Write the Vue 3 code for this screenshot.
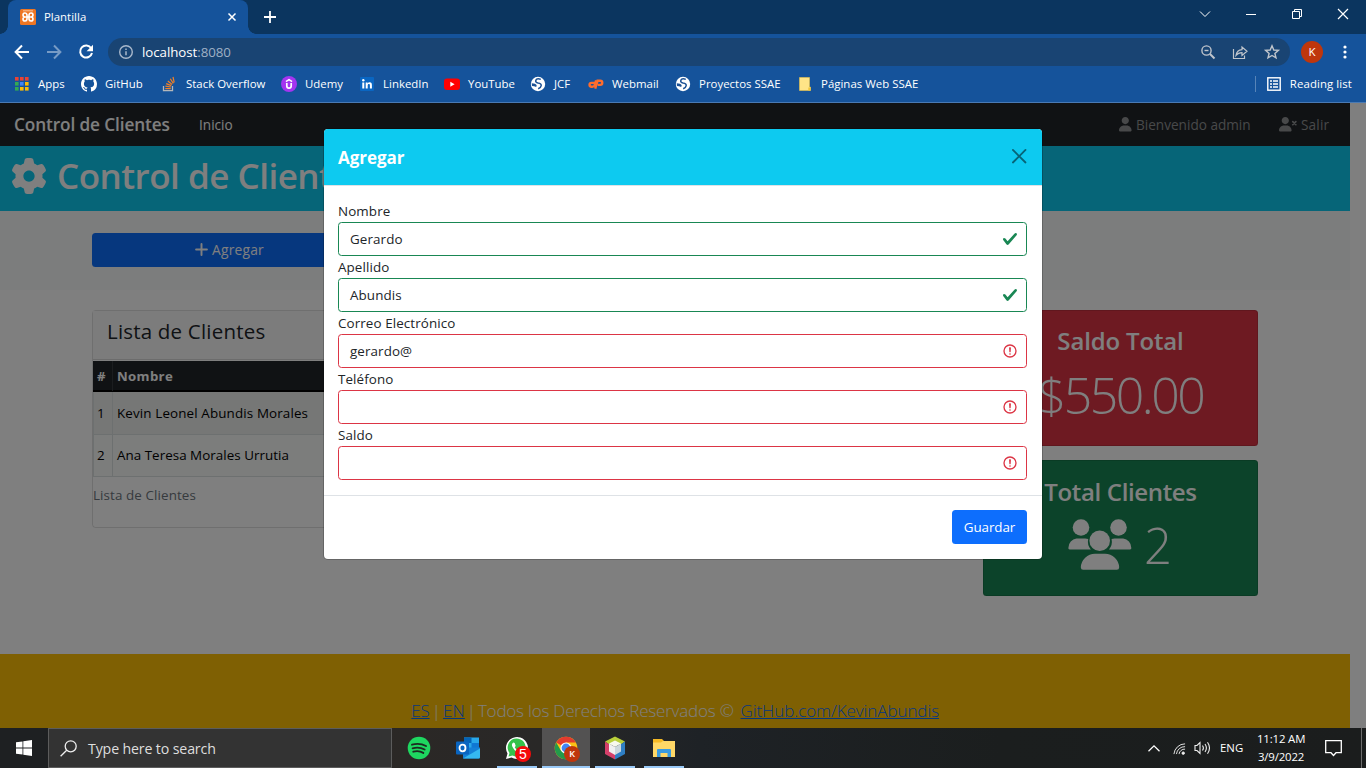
<script setup>
const bookmarks = [
  { id: 'apps', label: 'Apps' },
  { id: 'github', label: 'GitHub' },
  { id: 'stack', label: 'Stack Overflow' },
  { id: 'udemy', label: 'Udemy' },
  { id: 'linkedin', label: 'LinkedIn' },
  { id: 'youtube', label: 'YouTube' },
  { id: 'globe', label: 'JCF' },
  { id: 'cpanel', label: 'Webmail' },
  { id: 'globe', label: 'Proyectos SSAE' },
  { id: 'folder', label: 'Páginas Web SSAE' }
]
const appDots = ['#ea4335', '#ea4335', '#ea4335', '#34a853', '#4285f4', '#fbbc05', '#34a853', '#fbbc05', '#fbbc05']
const fields = [
  { label: 'Nombre', value: 'Gerardo', valid: true },
  { label: 'Apellido', value: 'Abundis', valid: true },
  { label: 'Correo Electrónico', value: 'gerardo@', valid: false },
  { label: 'Teléfono', value: '', valid: false },
  { label: 'Saldo', value: '', valid: false }
]
const clients = ['Kevin Leonel Abundis Morales', 'Ana Teresa Morales Urrutia']
const userPath = 'M224 256c70.7 0 128-57.3 128-128S294.7 0 224 0S96 57.3 96 128s57.3 128 128 128zm-45.7 48C79.8 304 0 383.8 0 482.3C0 498.7 13.3 512 29.7 512H418.3c16.4 0 29.7-13.3 29.7-29.7C448 383.8 368.2 304 269.7 304H178.3z'
</script>

<template>
  <div class="screen">
    <header class="chrome">
      <div class="tabs">
        <div class="tab">
          <svg class="fav" viewBox="0 0 16 16"><rect width="16" height="16" rx="1.5" fill="#ee7623" /><path d="M3 1.800h10" stroke="#fbd3b5" stroke-width=".8" /><path d="M6.200 8H5a2 2 0 1 1 2-2.200v4.400A2 2 0 1 1 5 8M9.800 8H11a2 2 0 1 0-2-2.200v4.400A2 2 0 1 0 11 8M6.500 8h3" fill="none" stroke="#fff" stroke-width="1.600" /></svg>
          <span class="tab-title">Plantilla</span>
          <svg class="tab-x" viewBox="0 0 8 8"><path d="M.5.5l7 7M7.500.5l-7 7" stroke="#fff" stroke-width="1.5" /></svg>
        </div>
        <svg class="plus" viewBox="0 0 12 12"><path d="M6 0v12M0 6h12" stroke="#fff" stroke-width="1.8" /></svg>
        <div class="win">
          <svg viewBox="0 0 12 12"><path d="M1 3.500l5 5 5-5" fill="none" stroke="#fff" /></svg>
          <svg viewBox="0 0 12 12"><path d="M1 6.500h10" stroke="#fff" /></svg>
          <svg viewBox="0 0 12 12"><path d="M1.500 3.500h7v7h-7zM3.500 3.500v-2h7v7h-2" fill="none" stroke="#fff" /></svg>
          <svg viewBox="0 0 12 12"><path d="M1 1l10 10M11 1L1 11" stroke="#fff" stroke-width="1.2" /></svg>
        </div>
      </div>
      <div class="toolbar">
        <svg class="nav" viewBox="0 0 16 16"><path d="M15 8H2M8 1.500L1.600 8 8 14.500" fill="none" stroke="#fff" stroke-width="2" /></svg>
        <svg class="nav dim" viewBox="0 0 16 16"><path d="M1 8h13M8 1.500L14.400 8 8 14.500" fill="none" stroke="#fff" stroke-width="2" /></svg>
        <svg class="nav" viewBox="0 0 16 16"><path d="M13.200 4.200A6 6 0 1 0 14 9" fill="none" stroke="#fff" stroke-width="2" /><path d="M15 .8v6.400H8.600z" fill="#fff" /></svg>
        <div class="omni">
          <svg class="info" viewBox="0 0 16 16"><circle cx="8" cy="8" r="6.300" fill="none" stroke="#a9b8cb" stroke-width="1.400" /><path d="M8 7.200v4M8 4.400v1.500" stroke="#a9b8cb" stroke-width="1.500" /></svg>
          <span class="url">localhost<i>:8080</i></span>
          <div class="omni-icons">
            <svg viewBox="0 0 16 16"><circle cx="6.500" cy="6.500" r="4.600" /><path d="M10 10l4.500 4.500" stroke-width="2" /><path d="M4.500 6.500h4" /></svg>
            <svg viewBox="0 0 16 16"><path d="M1.500 5v9.500h11v-3M4 11.500c.5-3.500 2.500-5.500 6-5.800V3l5 4.300-5 4.200V8.700c-2.800 0-4.500.9-6 2.800z" stroke-width="1.200" /></svg>
            <svg viewBox="0 0 16 16"><path d="M8 1.800l1.800 4.200 4.600.4-3.500 3 1.100 4.500L8 11.500l-4 2.400 1.100-4.500-3.500-3 4.600-.4z" /></svg>
          </div>
        </div>
        <span class="avatar">K</span>
        <svg class="dots" viewBox="0 0 4 14"><circle cx="2" cy="2" r="1.600" /><circle cx="2" cy="7" r="1.600" /><circle cx="2" cy="12" r="1.600" /></svg>
      </div>
      <div class="bookmarks">
        <div v-for="(b, i) in bookmarks" :key="i" class="bm">
          <svg viewBox="0 0 16 16">
            <template v-if="b.id === 'apps'"><rect v-for="(c, n) in appDots" :key="n" :x="1 + (n % 3) * 5" :y="1 + Math.floor(n / 3) * 5" width="3.600" height="3.600" :fill="c" /></template>
            <path v-else-if="b.id === 'github'" fill="#fff" d="M8 0C3.580 0 0 3.580 0 8c0 3.540 2.290 6.530 5.470 7.590.4.070.55-.17.55-.38 0-.19-.01-.82-.01-1.490-2.010.37-2.530-.49-2.690-.94-.09-.23-.48-.94-.82-1.130-.28-.15-.68-.52-.01-.53.63-.01 1.080.58 1.230.82.72 1.210 1.870.87 2.330.66.07-.52.28-.87.51-1.070-1.780-.2-3.640-.89-3.640-3.950 0-.87.31-1.590.82-2.150-.08-.2-.36-1.020.08-2.120 0 0 .67-.21 2.200.82.64-.18 1.320-.27 2-.27s1.360.09 2 .27c1.530-1.040 2.200-.82 2.200-.82.44 1.100.16 1.920.08 2.120.51.56.82 1.270.82 2.150 0 3.070-1.870 3.750-3.650 3.950.29.25.54.73.54 1.480 0 1.070-.01 1.930-.01 2.200 0 .21.15.46.55.38A8.010 8.010 0 0 0 16 8c0-4.420-3.580-8-8-8z" />
            <g v-else-if="b.id === 'stack'" fill="none"><path d="M1.500 10v4.700h9V10" stroke="#b4b7ba" stroke-width="1.300" /><path d="M3.300 12.700h5.500M3.400 10.200l5.500.8M4.200 7.600l5.100 2M5.800 5l4.300 3.500M8.300 2.700l3 4.700M11 1l1.200 5.500" stroke="#f48024" stroke-width="1.200" /></g>
            <g v-else-if="b.id === 'udemy'"><circle cx="8" cy="8" r="8" fill="#a435f0" /><path d="M5.800 7v3a2.200 2.200 0 0 0 4.400 0V7" fill="none" stroke="#fff" stroke-width="1.700" /><path d="M4.900 5.600L8 3.700l3.100 1.900" fill="none" stroke="#fff" stroke-width="1.500" /></g>
            <g v-else-if="b.id === 'linkedin'"><rect x="1" y="1" width="14" height="14" rx="1" fill="#0a66c2" /><path d="M3.300 6.500h2v6h-2zM6.700 6.500h1.900v.9c.4-.7 1.100-1.100 2-1.100 1.900 0 2.300 1.200 2.300 3v3.200h-2V9.600c0-.9-.1-1.500-1-1.500s-1.200.7-1.200 1.500v2.900h-2z" fill="#fff" /><circle cx="4.300" cy="4.300" r="1.200" fill="#fff" /></g>
            <g v-else-if="b.id === 'youtube'"><rect y="2.500" width="16" height="11.500" rx="3" fill="red" /><path d="M6.300 5.800v5l4.300-2.500z" fill="#fff" /></g>
            <g v-else-if="b.id === 'globe'"><circle cx="8" cy="8" r="7.200" fill="#fff" /><path d="M10.800 3.400q-4-1.500-5 1-.6 2 2.200 2.600 3.500.5 3.200 2.600-.3 2-3 3.200" fill="none" stroke="#1c5296" stroke-width="1.500" /><path d="M1.700 7.300q4 .2 5 2l-.5 1.800q-2-1-4.200-1z" fill="#1c5296" /></g>
            <g v-else-if="b.id === 'cpanel'" fill="none" stroke="#ff6c2c" stroke-width="2.400"><path d="M6.300 6.900H3.500a1.900 1.900 0 0 0 0 3.900h.9q1.800 0 2.300-1.800L8.100 4.300" /><path d="M7.200 12.600L9.500 4.800h2.700a2 2 0 0 1 0 4.100H9.800" /></g>
            <g v-else><path d="M2.500 1.500h10v9.500h1v3.500h-11z" fill="#ffe487" stroke="#e8c34a" stroke-width=".6" /><path d="M11.300 14.500v-3h2.200v3z" fill="#f0c63c" /></g>
          </svg>
          <span>{{ b.label }}</span>
        </div>
        <div class="reading">
          <svg viewBox="0 0 14 14"><rect x=".8" y=".8" width="12.400" height="12.400" fill="none" stroke="#fff" stroke-width="1.400" /><path d="M3 4h2M3 7h2M3 10h2M6 4h5M6 7h5M6 10h5" stroke="#fff" stroke-width="1.500" /></svg>
          <span>Reading list</span>
        </div>
      </div>
    </header>

    <main class="viewport">
      <div class="page">
        <nav class="navbar">
          <span class="brand">Control de Clientes</span>
          <span class="inicio">Inicio</span>
          <div class="user">
            <svg class="i-user" viewBox="0 0 448 512"><path :d="userPath" /></svg><span class="welcome">Bienvenido admin</span>
            <svg class="i-userx" viewBox="0 0 640 512"><path :d="userPath" /><path d="M490 165L600 275M600 165L490 275" stroke="currentColor" stroke-width="60" stroke-linecap="round" /></svg><span class="salir">Salir</span>
          </div>
        </nav>
        <header class="banner">
          <svg viewBox="0 0 512 512"><path d="M495.900 166.600c3.200 8.700.5 18.400-6.400 24.600l-43.300 39.400c1.100 8.300 1.700 16.800 1.700 25.400s-.6 17.100-1.700 25.400l43.300 39.400c6.900 6.200 9.600 15.900 6.400 24.600c-4.400 11.900-9.700 23.300-15.800 34.300l-4.700 8.100c-6.600 11-14 21.400-22.100 31.200c-5.900 7.200-15.700 9.600-24.500 6.800l-55.700-17.700c-13.400 10.300-28.200 18.900-44 25.400l-12.500 57.100c-2 9.100-9 16.300-18.200 17.800c-13.800 2.300-28 3.500-42.500 3.500s-28.700-1.200-42.500-3.500c-9.200-1.500-16.200-8.700-18.200-17.800l-12.500-57.100c-15.800-6.500-30.600-15.100-44-25.400L83.100 425.900c-8.800 2.800-18.600.3-24.500-6.800c-8.100-9.800-15.500-20.200-22.100-31.200l-4.700-8.100c-6.100-11-11.400-22.400-15.800-34.300c-3.200-8.700-.5-18.400 6.400-24.600l43.300-39.400C64.600 273.100 64 264.600 64 256s.6-17.100 1.700-25.400L22.400 191.200c-6.900-6.200-9.600-15.900-6.400-24.600c4.400-11.900 9.700-23.300 15.800-34.300l4.700-8.100c6.600-11 14-21.400 22.100-31.200c5.900-7.200 15.700-9.600 24.500-6.800l55.700 17.700c13.400-10.300 28.200-18.900 44-25.400l12.500-57.100c2-9.100 9-16.300 18.200-17.800C227.300 1.200 241.500 0 256 0s28.700 1.200 42.500 3.500c9.200 1.500 16.200 8.700 18.200 17.800l12.500 57.100c15.800 6.500 30.600 15.100 44 25.400l55.700-17.700c8.800-2.800 18.600-.3 24.500 6.800c8.100 9.800 15.500 20.200 22.100 31.200l4.700 8.100c6.100 11 11.400 22.400 15.800 34.300zM256 336c44.200 0 80-35.800 80-80s-35.800-80-80-80s-80 35.800-80 80s35.800 80 80 80z" /></svg>
          <h1>Control de Clientes</h1>
        </header>
        <section class="actions">
          <button class="add"><svg viewBox="0 0 12 12"><path d="M6 1v10M1 6h10" stroke="#fff" stroke-width="1.800" stroke-linecap="round" /></svg><span>Agregar</span></button>
        </section>
        <section class="content">
          <div class="card">
            <h4>Lista de Clientes</h4>
            <div class="thead"><span>#</span><span>Nombre</span></div>
            <div v-for="(c, i) in clients" :key="c" class="row"><span>{{ i + 1 }}</span><span>{{ c }}</span></div>
            <p>Lista de Clientes</p>
          </div>
          <aside>
            <div class="stat red"><h3>Saldo Total</h3><div class="num">$550.00</div></div>
            <div class="stat green">
              <h3 class="tc">Total Clientes</h3>
              <div class="people">
                <svg viewBox="0 0 64 52"><circle cx="13" cy="8.500" r="8.300" /><circle cx="50.500" cy="8.500" r="8.300" /><circle cx="31.700" cy="21.700" r="10.300" /><path d="M8.500 19.500h8.700c1 0 2 .2 3 .5a12.500 12.500 0 0 0 2.600 10.500H2A1.500 1.500 0 0 1 .4 28.700 9.500 9.500 0 0 1 8.500 19.500zM46.500 19.500h8.700a9.500 9.500 0 0 1 8.100 9.200 1.500 1.500 0 0 1-1.600 1.800H41a12.500 12.500 0 0 0 2.600-10.500c1-.3 1.900-.5 2.900-.5zM27 34.800h10a14.200 14.200 0 0 1 14.200 13.500q0 2.500-2.400 2.500H15.200q-2.400 0-2.400-2.500A14.200 14.200 0 0 1 27 34.800z" /></svg>
                <span>2</span>
              </div>
            </div>
          </aside>
        </section>
        <footer class="foot"><p><a class="es">ES</a><span class="bar">|</span><a class="en">EN</a><span class="bar">|</span><span class="rights">Todos los Derechos Reservados ©</span><a class="gh">GitHub.com/KevinAbundis</a></p></footer>
      </div>
      <div class="shade"></div>
      <div class="modal">
        <div class="m-head"><h5>Agregar</h5><svg viewBox="0 0 16 16"><path d="M.293.293a1 1 0 011.414 0L8 6.586 14.293.293a1 1 0 111.414 1.414L9.414 8l6.293 6.293a1 1 0 01-1.414 1.414L8 9.414l-6.293 6.293a1 1 0 01-1.414-1.414L6.586 8 .293 1.707a1 1 0 010-1.414z" /></svg></div>
        <div class="m-body">
          <template v-for="f in fields" :key="f.label">
            <label>{{ f.label }}</label>
            <div class="input" :class="{ ok: f.valid }">
              <span>{{ f.value }}</span>
              <svg v-if="f.valid" viewBox="0 0 8 8"><path fill="#198754" d="M2.300 6.730.6 4.530c-.4-1.040.46-1.400 1.100-.8l1.100 1.400 3.400-3.800c.6-.63 1.600-.27 1.200.7l-4 4.600c-.43.5-.8.4-1.100.1z" /></svg>
              <svg v-else class="bad" viewBox="0 0 12 12" fill="none" stroke="#dc3545"><circle cx="6" cy="6" r="4.500" /><path stroke-linejoin="round" d="M5.800 3.600h.4L6 6.500z" /><circle cx="6" cy="8.200" r=".6" fill="#dc3545" stroke="none" /></svg>
            </div>
          </template>
        </div>
        <div class="m-foot"><button class="save">Guardar</button></div>
      </div>
    </main>

    <div class="taskbar">
      <div class="start"><svg viewBox="0 0 16 16" fill="#fff"><path d="M0 2.300L6.500 1.400V7.600H0zM7.300 1.300L16 0v7.600H7.300zM0 8.400h6.500v6.200L0 13.700zM7.300 8.400H16V16l-8.700-1.300z" /></svg></div>
      <div class="search"><svg viewBox="0 0 17 17" fill="none" stroke="#eee" stroke-width="1.300"><circle cx="10.700" cy="6.300" r="5.500" /><path d="M6.700 10.200L.6 16.300" /></svg><span>Type here to search</span></div>
      <div class="apps">
        <div class="app"><svg viewBox="0 0 24 24"><circle cx="12" cy="12" r="11.300" fill="#1ed760" /><path d="M5 8.700q7.500-2.200 14 1.300M5.600 12.300q6.500-1.800 12 1.200M6.300 15.700q5.500-1.500 10 1.200" fill="none" stroke="#1c2a20" stroke-width="1.900" stroke-linecap="round" /></svg></div>
        <div class="app"><svg viewBox="0 0 24 24"><rect x="8" y="1.500" width="15" height="13" fill="#28a8ea" /><path d="M8 1.500h7.500V7H8z" fill="#0364b8" /><path d="M15.500 7H23v6h-7.500z" fill="#0f78d4" /><path d="M7 11.500h17V21a1.500 1.500 0 0 1-1.500 1.500H7z" fill="#1480d8" /><path d="M24 12.500L7 22.500h15.500A1.500 1.500 0 0 0 24 21z" fill="#35b8f1" /><rect x="0" y="5.500" width="13" height="13" rx="1" fill="#0a65c0" /><ellipse cx="6.500" cy="12" rx="3" ry="3.300" fill="none" stroke="#fff" stroke-width="1.800" /></svg></div>
        <div class="app open"><svg viewBox="0 0 24 24"><path d="M1 23l1.500-5.500A11 11 0 1 1 6.500 21.500z" fill="#fff" /><path d="M3.500 20.500l1-3.500A9 9 0 1 1 7.500 19.500z" fill="#35c24b" /><path d="M8.300 6.500q-2.500 1.700-.5 5 2.500 4.500 7.200 6 2.700.3 3-2.500l-2.700-1.300-1.300 1.400q-3-1.200-4.300-3.900l1-1.200-1-3z" fill="#fff" /></svg><b class="badge">5</b></div>
        <div class="app open active"><svg viewBox="0 0 24 24"><circle cx="12" cy="12" r="11.300" fill="#fbc116" /><path d="M12 12L2.200 6.400A11.300 11.300 0 0 1 21.800 6.400H12z" fill="#e33b2e" /><path d="M12 12l-5 2.800L2.200 6.400A11.300 11.300 0 0 0 12 23.300l4.700-8.500z" fill="#229a4b" /><circle cx="12" cy="12" r="5.600" fill="#fff" /><circle cx="12" cy="12" r="4.400" fill="#4285f4" /></svg><b class="badge k">K</b></div>
        <div class="app open"><svg viewBox="0 0 24 24"><path d="M12 .5L22 5.500 17 9l-5-3-5 3-5-3.500z" fill="#b9cf3a" /><path d="M2 5.500L7 9v6l5 3v5.500L2 18z" fill="#d5406a" /><path d="M22 5.500L17 9v6l-5 3v5.500L22 18z" fill="#2f7fc4" /><path d="M12 4.500l6 3-6 3.500-6-3.500z" fill="#f7f9ee" /><path d="M6 7.500L12 11v8l-6-3.500z" fill="#f0f1f1" /><path d="M18 7.500L12 11v8l6-3.500z" fill="#ccd8dd" /></svg></div>
        <div class="app open"><svg viewBox="0 0 24 24"><path d="M1 3h9l2 2h11v16H1z" fill="#f5b925" /><path d="M1 6.500h8l2-1.500h12v16H1z" fill="#ffd867" /><path d="M5 21v-7q0-1 1-1h12q1 0 1 1v7h-3.500v-4h-7v4z" fill="#3a9be0" /></svg></div>
      </div>
      <div class="tray">
        <svg class="up" viewBox="0 0 12 7"><path d="M.5 6.200L6 .9l5.500 5.300" fill="none" stroke="#fff" stroke-width="1.300" /></svg>
        <svg class="wifi" viewBox="0 0 14 14" fill="none" stroke="#eee" stroke-width="1"><path d="M1 13A12 12 0 0 1 13 2M3.700 13A9 9 0 0 1 13 5M6.500 13A6 6 0 0 1 13 7.700" /><circle cx="11" cy="12" r="1.300" fill="#eee" /></svg>
        <svg class="vol" viewBox="0 0 17 14" fill="none" stroke="#eee" stroke-width="1.100"><path d="M1 4.500h2L6 1.500v11l-3-3H1zM8.500 4.500q1.800 2.500 0 5M11 3q2.800 4 0 8M13.500 1.300q4 5.700 0 11.400" /></svg>
        <span class="eng">ENG</span>
        <div class="clock"><span>11:12 AM</span><span>3/9/2022</span></div>
        <svg class="note" viewBox="0 0 17 17"><path d="M.7.700h15.600v12H11l-2.500 2.800L6 12.700H.7z" fill="none" stroke="#fff" stroke-width="1.300" /></svg>
      </div>
    </div>
  </div>
</template>

<style>
body { margin: 0; }
</style>

<style scoped>
* { box-sizing: border-box; }
svg { display: block; flex: none; overflow: visible; }
h1, h3, h4, h5, p { margin: 0; }
button { border: 0; padding: 0; font-family: inherit; }
.screen { width: 1366px; height: 768px; overflow: hidden; display: flex; flex-direction: column; font-family: "Open Sans", "Noto Sans", sans-serif; white-space: nowrap; }

.chrome { height: 103px; flex: none; background: #15539b; border-bottom: 1px solid #4a7ab3; color: #fff; font-size: 11.4px; }
.tabs { height: 34px; background: #0b355f; display: flex; padding-left: 8px; align-items: flex-start; }
.tab { position: relative; width: 240px; height: 34px; background: #15539b; border-radius: 8px 8px 0 0; display: flex; align-items: center; padding: 0 12px; }
.tab::before, .tab::after { content: ""; position: absolute; bottom: 0; width: 8px; height: 8px; }
.tab::before { left: -8px; background: radial-gradient(circle at 0 0, transparent 7.500px, #15539b 8px); }
.tab::after { right: -8px; background: radial-gradient(circle at 100% 0, transparent 7.500px, #15539b 8px); }
.fav { width: 16px; height: 16px; }
.tab-title { margin-left: 8px; letter-spacing: .02px; padding-bottom: 1px; }
.tab-x { width: 8px; height: 8px; margin-left: auto; margin-right: 0; }
.plus { width: 12px; height: 12px; margin: 11px 0 0 16px; }
.win { margin-left: auto; display: flex; gap: 34px; padding: 8px 17px 0 0; }
.win svg { width: 12px; height: 12px; }
.toolbar { height: 36px; display: flex; align-items: center; padding-left: 14px; }
.nav { width: 16px; height: 16px; margin-right: 16px; }
.dim { opacity: .42; }
.omni { width: 1182px; height: 28px; margin-left: -2px; border-radius: 14px; background: #194473; display: flex; align-items: center; padding-left: 10px; }
.info { width: 16px; height: 16px; }
.url { margin-left: 8px; font-size: 13.300px; letter-spacing: -.05px; }
.url i { font-style: normal; color: #9fb0c5; }
.omni-icons { margin-left: auto; display: flex; gap: 16px; padding-right: 10px; }
.omni-icons svg { width: 16px; height: 16px; fill: none; stroke: #c0c5cc; stroke-width: 1.400; }
.avatar { width: 22px; height: 22px; border-radius: 50%; background: #bf360c; margin-left: 11px; text-align: center; line-height: 22px; font-size: 11.500px; }
.dots { width: 4px; height: 14px; margin-left: 20px; fill: #fff; }
.bookmarks { height: 28px; display: grid; grid-template-columns: 67px 81px 119px 78px 85px 86px 58px 87px 122px 1fr auto; padding: 0 14px; align-items: center; }
.bm { display: flex; align-items: center; gap: 8px; letter-spacing: .03px; }
.bm span, .reading span { padding-bottom: 2px; }
.bm svg { width: 16px; height: 16px; }
.reading { display: flex; align-items: center; height: 16px; border-left: 1px solid #5784b8; padding-left: 11px; gap: 9px; letter-spacing: .1px; }
.reading svg { width: 14px; height: 14px; }

.viewport { position: relative; height: 625px; flex: none; background: #fff; }
.page { width: 1350px; height: 625px; display: flex; flex-direction: column; }
.shade { position: absolute; inset: 0; background: rgba(0, 0, 0, .5); }
.navbar { height: 43px; background: #212529; color: #fff; display: flex; align-items: center; padding: 0 21px 0 14px; font-size: 13.600px; line-height: 20px; }
.brand { font-size: 17.200px; font-weight: 600; letter-spacing: -.1px; width: 185px; }
.inicio { letter-spacing: 0; }
.user { margin-left: auto; display: flex; align-items: center; color: #909294; fill: currentColor; }
.i-user { width: 12.600px; height: 14.400px; margin-right: 4px; }
.welcome { width: 143px; letter-spacing: 0; }
.i-userx { width: 18px; height: 14.400px; margin-right: 4px; }
.salir { letter-spacing: .15px; width: 28px; }
.banner { height: 65px; background: #0dcaf0; color: #fff; display: flex; align-items: center; padding: 0 11px 6px; }
.banner svg { width: 36px; height: 36px; fill: #fff; }
.banner h1 { font-size: 35px; font-weight: 600; letter-spacing: -.5px; margin-left: 10px; line-height: 42px; }
.actions { height: 79px; background: #f8fafa; padding: 22px 92px; }
.add { width: 275px; height: 34px; border-radius: 3.500px; background: #0d6efd; color: #fff; display: flex; align-items: center; justify-content: center; gap: 4px; font-size: 13.800px; letter-spacing: .2px; padding-bottom: 1px; }
.add svg { width: 13px; height: 13px; }
.content { display: flex; gap: 14px; padding: 20px 92px 0; height: 364px; }
.card { width: 877px; height: 218px; border: 1px solid rgba(0, 0, 0, .125); border-radius: 3.500px; color: #000; font-size: 13.400px; }
.card h4 { height: 49px; padding: 0 14px; background: #f9f9f9; border-bottom: 1px solid rgba(0, 0, 0, .125); font-size: 20.500px; line-height: 41px; font-weight: 500; letter-spacing: .2px; color: #212529; margin-bottom: 1px; }
.thead, .row { display: grid; grid-template-columns: 20px 1fr; align-items: stretch; }
.thead { height: 31px; background: #212529; color: #fff; border-bottom: 2px solid #000; font-weight: 700; line-height: 30px; font-size: 13.200px; letter-spacing: .35px; }
.thead span, .row span { padding-left: 4px; }
.thead span:first-child { border-right: 1px solid #373b3e; }
.row { height: 42px; line-height: 41px; border-bottom: 1px solid #dbe0e0; background: #f8faf9; letter-spacing: .03px; }
.row span:first-child { border-right: 1px solid #dbe0e0; border-left: 1px solid #dbe0e0; padding-left: 3px; }
.thead + .row { background: #eceeed; letter-spacing: .13px; height: 43px; line-height: 43px; }
.card p { color: #6c757d; line-height: 20px; margin-top: 8px; letter-spacing: .1px; }
.stat { width: 275px; height: 136px; border-radius: 3.500px; border: 1px solid rgba(0, 0, 0, .125); text-align: center; color: #fff; padding-top: 13px; }
.red { background-color: #dc3545; margin-bottom: 14px; }
.green { background-color: #198754; padding-top: 14px; }
.stat h3 { font-size: 24px; line-height: 34px; font-weight: 600; letter-spacing: -.15px; }
.stat .tc { letter-spacing: -.35px; }
.num { font-size: 50px; font-weight: 300; line-height: 56px; letter-spacing: -2.500px; margin-top: 9px; }
.people { display: flex; align-items: center; justify-content: flex-start; padding-left: 84px; font-weight: 300; line-height: 56px; margin-top: 8px; gap: 12px; }
.people svg { width: 64px; height: 52px; fill: #fff; margin-top: -1px; }
.people span { font-size: 49px; }
.foot { flex: 1; background: #ffc107; padding-top: 45px; color: #fff; text-align: center; font-size: 17px; font-weight: 300; line-height: 24px; }
.foot p { display: flex; width: 528px; margin-left: 411px; }
.foot a { color: #0d6efd; text-decoration: underline; }
.es { width: 19px; letter-spacing: -.2px; }
.en { width: 22px; letter-spacing: .1px; }
.bar { width: 13px; text-align: center; }
.rights { width: 263px; text-align: left; letter-spacing: -.2px; }
.gh { letter-spacing: -.08px; }

.modal { position: absolute; left: 324px; top: 26px; width: 718px; height: 430px; background: #fff; border-radius: 4px; box-shadow: 0 0 0 1px rgba(0, 0, 0, .2); overflow: hidden; color: #212529; }
.m-head { height: 57px; background: #0dcaf0; border-bottom: 1px solid #dee2e6; display: flex; justify-content: space-between; align-items: center; padding: 0 16px 2px 14px; }
.m-head h5 { color: #fff; font-size: 17px; font-weight: 700; line-height: 24px; padding-top: 4px; letter-spacing: -.05px; }
.m-head svg { width: 14.400px; height: 14.400px; opacity: .5; }
.m-body { height: 309px; padding: 14px 15px 0 14px; font-size: 13.400px; letter-spacing: .1px; }
.m-body label { display: block; height: 22px; line-height: 23px; }
.input { height: 34px; border: 1px solid #dc3545; border-radius: 3.500px; display: flex; align-items: center; justify-content: space-between; padding: 0 8px 0 11px; }
.input.ok { border-color: #198754; }
.input svg { width: 16px; height: 16px; margin-top: -1px; }
.m-foot { border-top: 1px solid #dee2e6; padding: 14px 15px; display: flex; justify-content: flex-end; }
.save { width: 75px; height: 34px; background: #0d6efd; color: #fff; border-radius: 3.500px; font-size: 13.400px; letter-spacing: -.1px; padding-bottom: 1px; font-weight: 500; }

.taskbar { height: 40px; flex: none; display: flex; color: #fff; background: linear-gradient(90deg, #1e2022 0, #1e2022 48px, #2b2826 400px, #292827 540px, #1e2226 700px, #1b1e1e 1000px, #1b1d1d); }
.start { width: 48px; display: flex; align-items: center; justify-content: center; }
.start svg { width: 16px; height: 16px; }
.search { width: 344px; background: #333; border: 1px solid #5c5c5c; display: flex; align-items: center; padding-left: 11px; font-size: 14.200px; letter-spacing: -.15px; color: #dedede; }
.search svg { width: 17px; height: 17px; margin-right: 11px; }
.apps { display: flex; margin-left: 3px; gap: 1px; }
.app { position: relative; width: 48px; display: flex; align-items: center; justify-content: center; }
.app svg { width: 24px; height: 24px; }
.open::after { content: ""; position: absolute; left: 4px; right: 4px; bottom: 0; height: 2px; background: #99c9f7; }
.active { background: #535252; }
.active::after { left: 0; right: 0; }
.badge { position: absolute; left: 22px; top: 18px; width: 16px; height: 16px; border-radius: 50%; background: #f40b0b; font: 14px/16px "Liberation Sans", sans-serif; text-align: center; }
.badge.k { background: #bf360c; font: 600 9px/16px "Open Sans", sans-serif; }
.tray { margin-left: auto; display: flex; align-items: center; font-size: 11.400px; border-right: 1px solid #6c6c6c; margin-right: 4px; padding-right: 19px; }
.up { width: 12px; height: 7px; margin-right: 13px; }
.wifi { width: 13px; height: 13px; margin-right: 8px; }
.vol { width: 17px; height: 14px; margin-right: 9px; }
.eng { width: 37px; padding-bottom: 1px; }
.clock { display: flex; flex-direction: column; width: 48px; text-align: center; line-height: 18px; letter-spacing: -.15px; margin-top: -1px; }
.note { width: 17px; height: 17px; margin-left: 20px; }
</style>
